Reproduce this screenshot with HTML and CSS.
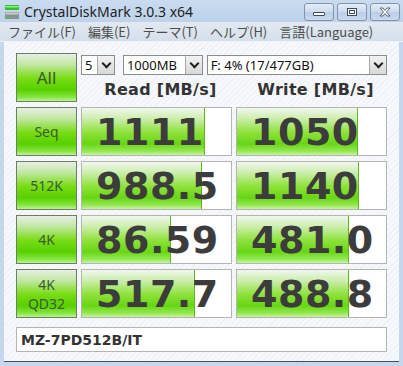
FILE: index.html
```html
<!DOCTYPE html>
<html lang="ja">
<head>
  <meta charset="UTF-8">
  <title>CrystalDiskMark 3.0.3 x64</title>
  <link rel="stylesheet" href="styles.css">
</head>
<body>
  <div class="window">
    <div class="titlebar">
      <svg class="app-icon" width="16" height="16" viewBox="0 0 16 16">
        <rect x="1" y="1" width="14" height="5" rx="1" fill="#2fbf2f"/>
        <rect x="1.5" y="2" width="13" height="1.5" fill="#8ef08e"/>
        <rect x="1" y="8" width="14" height="7" rx="1" fill="#8c9096"/>
        <rect x="1.5" y="8.5" width="13" height="2" fill="#c9ccd0"/>
        <rect x="2.5" y="12" width="3" height="1.5" fill="#3fd43f"/>
      </svg>
      <span class="title">CrystalDiskMark 3.0.3 x64</span>
      <div class="caption-buttons">
        <div class="cap-btn">
          <svg width="14" height="10" viewBox="0 0 14 10"><rect x="1.5" y="5.5" width="11" height="3" rx="0.5" fill="#fff" stroke="#3c4a5c"/></svg>
        </div>
        <div class="cap-btn">
          <svg width="14" height="10" viewBox="0 0 14 10"><rect x="2.5" y="1.5" width="9" height="7" fill="#fff" stroke="#3c4a5c"/><rect x="4.5" y="3.5" width="5" height="3" fill="none" stroke="#3c4a5c"/></svg>
        </div>
        <div class="cap-btn">
          <svg width="14" height="10" viewBox="0 0 14 10"><path d="M2 1h3l2 2.5L9 1h3L8.5 5 12 9H9L7 6.5 5 9H2l3.5-4z" fill="#fff" stroke="#3c4a5c" stroke-width="0.8"/></svg>
        </div>
      </div>
    </div>

    <div class="menubar">
      <span class="menu-item">ファイル(F)</span>
      <span class="menu-item">編集(E)</span>
      <span class="menu-item">テーマ(T)</span>
      <span class="menu-item">ヘルプ(H)</span>
      <span class="menu-item">言語(Language)</span>
    </div>

    <div class="client">
      <div class="grid">
        <div class="test-btn all-btn">All</div>
        <div class="controls">
          <div class="selects">
            <div class="select select-count"><span class="select-value">5</span><span class="select-arrow"></span></div>
            <div class="select select-size"><span class="select-value">1000MB</span><span class="select-arrow"></span></div>
            <div class="select select-drive"><span class="select-value">F: 4% (17/477GB)</span><span class="select-arrow"></span></div>
          </div>
          <div class="headers">
            <div class="col-head">Read [MB/s]</div>
            <div class="col-head">Write [MB/s]</div>
          </div>
        </div>

        <div class="test-btn">Seq</div>
        <div class="result"><div class="bar" style="width: 122px"></div><span class="value">1111</span></div>
        <div class="result"><div class="bar" style="width: 120px"></div><span class="value">1050</span></div>

        <div class="test-btn">512K</div>
        <div class="result"><div class="bar" style="width: 119px"></div><span class="value">988.5</span></div>
        <div class="result"><div class="bar" style="width: 121px"></div><span class="value">1140</span></div>

        <div class="test-btn">4K</div>
        <div class="result"><div class="bar" style="width: 88px"></div><span class="value">86.59</span></div>
        <div class="result"><div class="bar" style="width: 111px"></div><span class="value">481.0</span></div>

        <div class="test-btn two-line">4K<br>QD32</div>
        <div class="result"><div class="bar" style="width: 112px"></div><span class="value">517.7</span></div>
        <div class="result"><div class="bar" style="width: 111px"></div><span class="value">488.8</span></div>

        <div class="comment">MZ-7PD512B/IT</div>
      </div>
    </div>
  </div>
</body>
</html>
```

FILE: styles.css
```css
body {
  margin: 0;
  padding: 0;
  font-family: "DejaVu Sans", Verdana, sans-serif;
  background: #c4d7ed;
}

.window {
  width: 403px;
  height: 366px;
  display: flex;
  flex-direction: column;
  background: #c4d7ed;
  overflow: hidden;
}

.titlebar {
  height: 22px;
  display: flex;
  align-items: center;
  padding: 0 3px 0 4px;
  background: linear-gradient(#c9dbef, #bed2ea);
}

.app-icon {
  margin-right: 4px;
  margin-top: 1px;
}

.title {
  font-family: "Noto Sans", "Open Sans", sans-serif;
  font-size: 14px;
  color: #1e1e1e;
  flex-grow: 1;
  margin-top: 1px;
}

.caption-buttons {
  display: flex;
  gap: 3px;
  align-self: flex-start;
  margin-top: 3px;
}

.cap-btn {
  width: 28px;
  height: 16px;
  border: 1px solid #8294ad;
  border-radius: 3px;
  background: linear-gradient(#e4edf8, #cbdaec 50%, #bccde4 51%, #c9d9ee);
  display: flex;
  align-items: center;
  justify-content: center;
}

.menubar {
  height: 19px;
  display: flex;
  align-items: center;
  padding-left: 8px;
  background: linear-gradient(#e2e9f2, #d5dfeb);
  border-bottom: 1px solid #eef3f9;
}

.menu-item {
  font-family: "Noto Sans CJK JP", sans-serif;
  font-size: 13px;
  color: #4d4d4d;
  margin-right: 12px;
  line-height: 19px;
}

.client {
  flex-grow: 1;
  margin: 0 4px 4px 4px;
  padding: 11px 0 0 12px;
  background-color: #f6f8fb;
  background-image: repeating-linear-gradient(135deg, rgba(220, 228, 238, 0.35) 0 1px, transparent 1px 4px);
  border-bottom: 1px solid #44505e;
}

.grid {
  display: grid;
  grid-template-columns: 61px 151px 151px;
  grid-template-rows: 49px 49px 49px 49px 49px 29px;
  column-gap: 4px;
  row-gap: 5px;
}

.test-btn {
  box-sizing: border-box;
  border: 1px solid #6a8060;
  background: linear-gradient(#e9eee6 0%, #c2e8a4 22%, #78dc14 52%, #58d000 76%, #86e640 92%, #c0f09a 100%);
  display: flex;
  align-items: center;
  justify-content: center;
  text-align: center;
  font-family: "Noto Sans", "Open Sans", sans-serif;
  font-size: 14px;
  line-height: 20px;
  color: #3a5c2c;
}

.all-btn {
  font-size: 17px;
}

.two-line {
  line-height: 19px;
}

.controls {
  grid-column: 2 / 4;
  display: flex;
  flex-direction: column;
}

.selects {
  display: flex;
  margin-top: 2px;
  height: 20px;
}

.select {
  box-sizing: border-box;
  height: 20px;
  border: 1px solid #8c8c8c;
  background: #fff;
  display: flex;
  align-items: center;
  justify-content: space-between;
}

.select-count {
  width: 34px;
}

.select-size {
  width: 80px;
  margin-left: 8px;
}

.select-drive {
  width: 181px;
  margin-left: 4px;
}

.select-value {
  font-family: "Noto Sans", "Open Sans", sans-serif;
  font-size: 13px;
  color: #111;
  padding-left: 3px;
  line-height: 18px;
}

.select-arrow {
  box-sizing: border-box;
  width: 17px;
  height: 18px;
  border-left: 1px solid #a9a9a9;
  background: linear-gradient(#f2f2f2, #d8d8d8);
  position: relative;
}

.select-arrow::after {
  content: "";
  position: absolute;
  left: 5px;
  top: 4px;
  width: 5px;
  height: 5px;
  border-right: 2px solid #222;
  border-bottom: 2px solid #222;
  transform: rotate(45deg);
}

.headers {
  display: flex;
  gap: 4px;
  margin-top: 5px;
}

.col-head {
  width: 151px;
  text-align: center;
  font-weight: bold;
  font-size: 16px;
  color: #333;
  letter-spacing: 0.3px;
  padding-left: 8px;
}

.result {
  box-sizing: border-box;
  border: 1px solid #b4b4b4;
  background: #fff;
  position: relative;
  display: flex;
  align-items: center;
}

.bar {
  position: absolute;
  left: 0;
  top: 0;
  bottom: 0;
  border-right: 1px solid #5fb522;
  background: linear-gradient(#f2f7ee 0%, #cdeeb0 22%, #8ee23a 52%, #68d614 76%, #94e852 92%, #c8f4a4 100%);
}

.value {
  position: relative;
  padding-left: 14px;
  font-weight: bold;
  font-size: 38px;
  letter-spacing: 0.5px;
  color: #3c3c3c;
  line-height: 1;
}

.comment {
  grid-column: 1 / 4;
  box-sizing: border-box;
  margin-top: 4px;
  border: 1px solid #b4b4b4;
  background: #fff;
  display: flex;
  align-items: center;
  padding-left: 4px;
  font-weight: bold;
  font-size: 14px;
  color: #333;
}
```
